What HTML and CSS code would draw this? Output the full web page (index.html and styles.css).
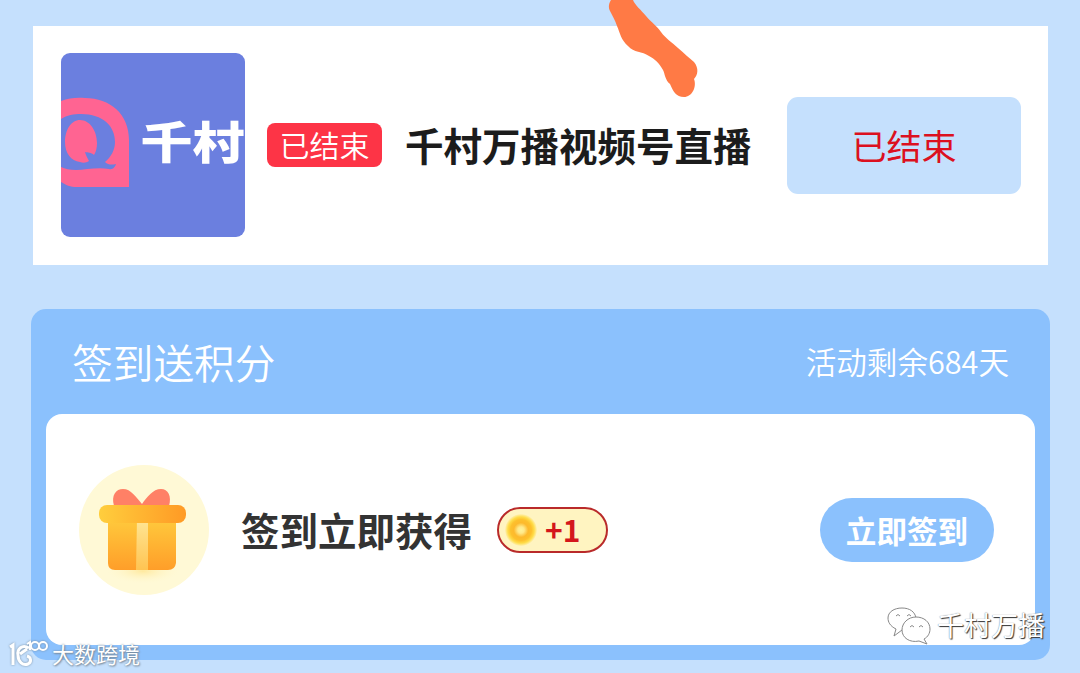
FILE: index.html
```
<!DOCTYPE html>
<html lang="zh-CN">
<head>
	<meta charset="UTF-8">
	<title>千村万播</title>
	<link rel="stylesheet" href="styles.css">
</head>
<body>
	<div class="live">
		<svg class="cover" viewBox="0 0 184 184">
			<rect width="184" height="184" fill="#6b7fdf"/>
			<path d="M0 48C8 45 15 44.500 24 45C49 45 68 61 68 87V134H16C9 134 5 132 0 129Z" fill="#ff6492"/>
			<path d="M0 66C6 62 13 61 20 61C42 61 54 73 54 89C54 97 50 104 44 109C47 112 51 112 55 111C54 114 52 117 48 116C36 114 24 117 15 117C9 117 4 116 0 114Z" fill="#6b7fdf"/>
			<path d="M19 67C29 67 36 78 36 90C36 95 35 99 33 102C30 99 27 100 24 99C25 103 27 106 28 108C25 110 22 110 19 109C10 108 4 100 4 89C4 77 10 67 19 67Z" fill="#ff6492"/>
			<text x="79.500" y="107" transform="translate(0 14) scale(1 .86)">千村</text>
		</svg>
		<span class="state">已结束</span>
		<h2>千村万播视频号直播</h2>
		<div class="over">已结束</div>
	</div>

	<div class="sign">
		<div class="sign-top">
			<h3>签到送积分</h3>
			<p>活动剩余684天</p>
		</div>
		<div class="sign-box">
			<svg class="gift" viewBox="0 0 134 134">
				<defs>
					<linearGradient id="box" x1="0" y1="0" x2="0" y2="1">
						<stop offset="0" stop-color="#ffcb3d"/>
						<stop offset="1" stop-color="#ff9e29"/>
					</linearGradient>
					<linearGradient id="lid">
						<stop offset="0" stop-color="#ffce3d"/>
						<stop offset="1" stop-color="#ff9a25"/>
					</linearGradient>
					<linearGradient id="band" x1="0" y1="0" x2="0" y2="1">
						<stop offset="0" stop-color="#ffe695"/>
						<stop offset="1" stop-color="#ffc452"/>
					</linearGradient>
					<radialGradient id="glow">
						<stop offset="0" stop-color="#ffe99e"/>
						<stop offset="1" stop-color="#fff9d4" stop-opacity="0"/>
					</radialGradient>
				</defs>
				<circle class="soft" cx="67" cy="67" r="65" fill="#fff9d6"/>
				<ellipse cx="66" cy="108" rx="38" ry="13" fill="url(#glow)"/>
				<g class="soft">
					<path d="M37 43C34 32 39 26 46 26C54 26 59 34 65 41C70 34 76 26 84 26C91 26 95 33 92 43Z" fill="#ff8066"/>
					<path d="M31 54H99V100Q98 107 91 107H38Q31 107 31 100Z" fill="url(#box)"/>
					<path d="M60 56H71V107H59Z" fill="url(#band)"/>
					<rect x="22" y="42" width="87" height="18" rx="8" fill="url(#lid)"/>
				</g>
			</svg>
			<strong>签到立即获得</strong>
			<div class="score"><i></i><b>+1</b></div>
			<div class="btn">立即签到</div>
		</div>
	</div>

	<svg class="stroke" width="110" height="100" viewBox="0 0 110 100">
		<path d="M21 0H43C45 5 51 10 56 16C62 23 66 25 71 32C76 39 82 42 88 48C94 53 99 58 104 62C109 68 108 75 104 79C107 87 102 97 94 97C86 97 83 91 80 84C75 80 75 74 73 70C69 63 65 59 59 56C52 51 44 53 38 46C31 40 30 33 27 26C25 20 23 17 20 11C18 7 19 3 21 0Z" fill="#ff7a45"/>
	</svg>

	<div class="wechat">
		<svg width="48" height="42" viewBox="0 0 48 42">
			<g class="bubble">
				<path d="M17 24L9 30L11 23C5 20 3 16 3 12C3 6 9 2 17 2C25 2 30 6 31 12"/>
				<path d="M31 11C39 11 45 16 45 23C45 27 43 31 39 33L42 38L34 35C25 37 17 32 17 24C17 17 23 11 31 11Z"/>
				<path d="M11 10Q13 7 15 10M22 10Q24 7 26 10M25 21Q27 18 29 21M34 21Q36 18 38 21"/>
			</g>
		</svg>
		<span>千村万播</span>
	</div>

	<div class="mark">
		<svg width="40" height="28" viewBox="0 0 40 28">
			<path d="M1 7L4 5V25M20 8C13 4 8 9 9 15C9 22 14 26 19 24C23 22 22 17 18 16M18 9L11 14"/>
			<path class="thin" d="M18 4L21 2V10"/>
			<circle class="thin" cx="26" cy="6" r="4"/>
			<circle class="thin" cx="34" cy="6" r="4"/>
		</svg>
		<span>大数跨境</span>
	</div>
</body>
</html>
```
FILE: styles.css
```
body, h2, h3, p {
	margin: 0;
	padding: 0;
}

body {
	position: relative;
	height: 673px;
	overflow: hidden;
	background-color: #c5e0fd;
	font-family: "Noto Sans CJK SC", sans-serif;
}

.live {
	display: flex;
	align-items: center;
	box-sizing: border-box;
	width: 1015px;
	height: 239px;
	margin: 26px 0 0 33px;
	padding: 0 27px 1px 28px;
	background-color: #fff;
}

.cover {
	width: 184px;
	height: 184px;
	border-radius: 9px;
}

.cover text {
	font-size: 52px;
	font-weight: 900;
	fill: #fff;
}

.state {
	width: 115px;
	height: 44px;
	margin-left: 22px;
	border-radius: 8px;
	background-color: #fd3446;
	color: #fff;
	font-size: 30px;
	font-weight: 350;
	line-height: 43px;
	text-align: center;
}

.live h2 {
	margin-left: 23px;
	padding-bottom: 2px;
	color: #1c1c1c;
	font-size: 38.5px;
	font-weight: bold;
	line-height: 50px;
}

.over {
	width: 234px;
	height: 97px;
	margin-left: auto;
	border-radius: 11px;
	background-color: #c5e0fd;
	color: #dc1020;
	font-size: 35px;
	line-height: 95px;
	text-align: center;
}

.sign {
	box-sizing: border-box;
	width: 1019px;
	height: 351px;
	margin: 44px 0 0 31px;
	padding: 0 15px;
	border-radius: 15px;
	background-color: #8bc1fd;
}

.sign-top {
	display: flex;
	align-items: center;
	justify-content: space-between;
	height: 105px;
	padding: 0 26px;
	color: #fff;
}

.sign-top h3 {
	font-size: 40.7px;
	font-weight: 350;
}

.sign-top p {
	padding-bottom: 1px;
	font-size: 30.6px;
	font-weight: 350;
}

.sign-box {
	display: flex;
	align-items: center;
	height: 231px;
	padding: 0 41px 0 31px;
	border-radius: 16px;
	background-color: #fff;
}

.gift {
	width: 134px;
	height: 134px;
}

.soft {
	filter: blur(.7px);
}

.sign-box strong {
	margin-left: 30px;
	padding-bottom: 2px;
	color: #333;
	font-size: 38.5px;
	font-weight: bold;
}

.score {
	display: flex;
	align-items: center;
	box-sizing: border-box;
	width: 111px;
	height: 46px;
	margin-left: 25px;
	padding-left: 6px;
	border: 2px solid #b92a2a;
	border-radius: 23px;
	background-color: #fff4c1;
}

.score i {
	width: 32px;
	height: 32px;
	border-radius: 50%;
	background: radial-gradient(circle, #fff39a 0, #ffe98a 14%, #fdb92c 32%, #fdc02c 46%, #ffdc48 58%, rgba(255, 240, 160, 0) 72%);
}

.score b {
	margin-left: 8px;
	padding-bottom: 2px;
	color: #d4161b;
	font-size: 30px;
	line-height: 42px;
}

.btn {
	width: 174px;
	height: 64px;
	margin-left: auto;
	border-radius: 32px;
	background-color: #8bc1fd;
	color: #fff;
	font-size: 30.6px;
	font-weight: bold;
	line-height: 64px;
	text-align: center;
}

/* hand-drawn mark over the card */
.stroke {
	position: absolute;
	left: 590px;
	top: 0;
}

.wechat {
	display: flex;
	align-items: center;
	position: absolute;
	left: 885px;
	top: 604px;
	color: #fff;
	font-size: 27px;
	line-height: 42px;
	text-shadow: 1px 1px 1px #333, 0 0 1px #666;
}

.wechat span {
	margin-left: 4px;
	padding-bottom: 3px;
}

.bubble {
	fill: #fff;
	stroke: #888;
	stroke-width: 1;
	stroke-linejoin: round;
}

.mark {
	display: flex;
	align-items: center;
	position: absolute;
	left: 9px;
	top: 638px;
	color: #fff;
	font-size: 22px;
	line-height: 30px;
	text-shadow: 0 0 2px #6e8294, 1px 1px 2px #8090a0;
}

.mark svg {
	fill: none;
	stroke: #fff;
	stroke-width: 3;
	filter: drop-shadow(0 0 1px #7890a8);
}

.mark .thin {
	stroke-width: 2;
}

.mark span {
	margin-left: 3px;
	padding-bottom: 2px;
}
```
